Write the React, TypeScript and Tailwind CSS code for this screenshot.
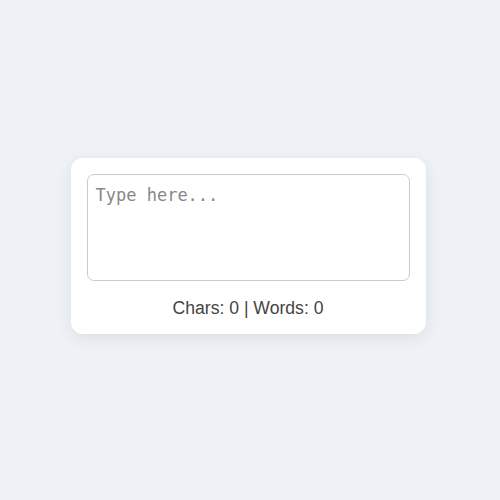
export default function App() {
  return (
    <div className="min-h-[500px] w-full bg-[#eef2f7] flex items-center justify-center pr-1 pb-[9px]" style={{ fontFamily: '"Liberation Sans", Arial, sans-serif' }}>
      <div className="w-[355px] bg-white rounded-[12px] shadow-[0_4px_16px_rgba(0,0,0,0.08)] p-4 flex flex-col">
        <textarea
          placeholder="Type here..."
          className="block w-full h-[107px] border border-[#ccc] rounded-[7px] p-2 text-[17px] resize-none outline-none placeholder:text-[#888]"
          style={{ fontFamily: '"DejaVu Sans Mono", monospace' }}
        />
        <div className="mt-[17px] text-center text-[17.6px] leading-[20px] text-[#444]">Chars: 0 | Words: 0</div>
      </div>
    </div>
  );
}
